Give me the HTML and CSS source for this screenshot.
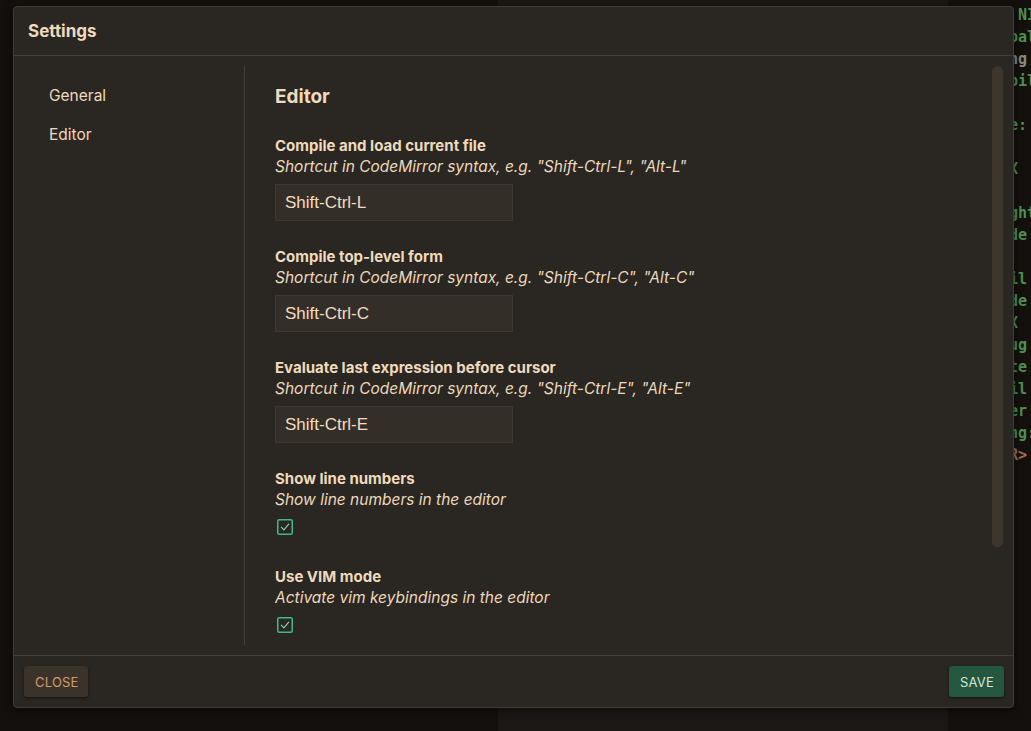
FILE: index.html
```html
<!DOCTYPE html>
<html>
<head>
<meta charset="utf-8">
<link rel="stylesheet" href="styles.css">
</head>
<body>
<div class="backdrop">
  <div class="bg-left"></div>
  <div class="bg-mid"></div>
  <div class="bg-right">
<pre class="code"><span class="g">" NIL</span>
<span class="g">epal</span>
<span class="m">ing </span>
<span class="g">opil</span>

<span class="g">le:</span>

<span class="g"> X </span>

<span class="g">ight</span>
<span class="g">nde</span>

<span class="g">pil</span>
<span class="g">nde</span>
<span class="g"> X </span>
<span class="g">aug</span>
<span class="g">ate </span>
<span class="g">pil</span>
<span class="g">ter</span>
<span class="g">ing:</span>
<span class="o">ER&gt;</span></pre>
  </div>
</div>

<div class="modal">
  <div class="modal-header">Settings</div>
  <div class="modal-body">
    <nav class="sidebar">
      <div class="nav-item">General</div>
      <div class="nav-item">Editor</div>
    </nav>
    <div class="content">
      <h2 class="section-title">Editor</h2>

      <div class="field">
        <div class="label">Compile and load current file</div>
        <div class="desc">Shortcut in CodeMirror syntax, e.g. "Shift-Ctrl-L", "Alt-L"</div>
        <div class="input">Shift-Ctrl-L</div>
      </div>

      <div class="field">
        <div class="label">Compile top-level form</div>
        <div class="desc">Shortcut in CodeMirror syntax, e.g. "Shift-Ctrl-C", "Alt-C"</div>
        <div class="input">Shift-Ctrl-C</div>
      </div>

      <div class="field">
        <div class="label">Evaluate last expression before cursor</div>
        <div class="desc">Shortcut in CodeMirror syntax, e.g. "Shift-Ctrl-E", "Alt-E"</div>
        <div class="input">Shift-Ctrl-E</div>
      </div>

      <div class="field check-field">
        <div class="label">Show line numbers</div>
        <div class="desc">Show line numbers in the editor</div>
        <div class="checkbox">
          <svg width="16" height="16" viewBox="0 0 16 16"><rect x="0.75" y="0.75" width="14.5" height="14.5" rx="1.5" fill="none" stroke="#3fb88a" stroke-width="1.5"/><path d="M4.3 8.2 L6.9 10.8 L11.7 5.2" fill="none" stroke="#8fd6b4" stroke-width="1.1" stroke-linecap="round" stroke-linejoin="round"/></svg>
        </div>
      </div>

      <div class="field check-field">
        <div class="label">Use VIM mode</div>
        <div class="desc">Activate vim keybindings in the editor</div>
        <div class="checkbox">
          <svg width="16" height="16" viewBox="0 0 16 16"><rect x="0.75" y="0.75" width="14.5" height="14.5" rx="1.5" fill="none" stroke="#3fb88a" stroke-width="1.5"/><path d="M4.3 8.2 L6.9 10.8 L11.7 5.2" fill="none" stroke="#8fd6b4" stroke-width="1.1" stroke-linecap="round" stroke-linejoin="round"/></svg>
        </div>
      </div>
    </div>
    <div class="scroll-track"><div class="scroll-thumb"></div></div>
  </div>
  <div class="modal-footer">
    <button class="btn btn-close">CLOSE</button>
    <button class="btn btn-save">SAVE</button>
  </div>
</div>
</body>
</html>
```

FILE: styles.css
```css
html, body {
  margin: 0;
  padding: 0;
  width: 1031px;
  height: 731px;
  overflow: hidden;
  background: #13100d;
  font-family: Inter, "Noto Sans", sans-serif;
}

.backdrop {
  display: flex;
  width: 1031px;
  height: 731px;
}
.bg-left { width: 498px; background: #13100d; }
.bg-mid { width: 450px; background: #1a1714; }
.bg-right { flex: 1; background: #13100d; overflow: hidden; }

.code {
  margin: 4px 0 0 52px;
  font-family: "DejaVu Sans Mono", monospace;
  font-size: 15px;
  font-weight: 600;
  line-height: 22px;
  color: #4f8f52;
  white-space: pre;
}
.code .m { color: #8a8a80; }
.code .o { color: #a26f4a; }

.modal {
  position: absolute;
  left: 13px;
  top: 6px;
  width: 999px;
  height: 700px;
  background: #2a2622;
  border: 1px solid #433c34;
  border-radius: 4px;
  box-shadow: 0 2px 8px rgba(0,0,0,0.5);
  display: flex;
  flex-direction: column;
  color: #efdabd;
}

.modal-header {
  height: 48px;
  flex: none;
  display: flex;
  align-items: center;
  padding-left: 14px;
  font-size: 17px;
  font-weight: 700;
  border-bottom: 1px solid #463e35;
}

.modal-body {
  flex: 1;
  display: flex;
  padding: 10px 0;
  min-height: 0;
}

.sidebar {
  width: 230px;
  flex: none;
  border-right: 1px solid #463e35;
  padding-top: 18px;
}
.nav-item {
  padding-left: 35px;
  font-size: 15.5px;
  line-height: 24px;
  height: 39px;
  color: #efdabd;
}

.content {
  flex: 1;
  overflow: hidden;
  padding: 19px 0 0 30px;
}

.section-title {
  margin: 0 0 26px;
  font-size: 19px;
  line-height: 24px;
  font-weight: 700;
}

.field { margin-bottom: 25px; }
.label {
  font-size: 15px;
  font-weight: 700;
  line-height: 21px;
}
.desc {
  font-size: 15.5px;
  font-style: italic;
  line-height: 21px;
  color: #ecd8bc;
}
.input {
  margin-top: 7px;
  width: 227px;
  height: 35px;
  padding-left: 9px;
  background: #342e28;
  border: 1px solid #3f3730;
  display: flex;
  align-items: center;
  font-family: "Liberation Sans", Arial, sans-serif;
  font-size: 17px;
  color: #f2dcc1;
}

.check-field { margin-bottom: 31px; }
.checkbox {
  margin-top: 9px;
  margin-left: 2px;
  width: 16px;
  height: 16px;
}
.checkbox svg { display: block; }

.scroll-track {
  width: 11px;
  flex: none;
  margin-right: 10px;
}
.scroll-thumb {
  height: 481px;
  background: #3e362d;
  border-radius: 6px;
}

.modal-footer {
  height: 51px;
  flex: none;
  border-top: 1px solid #463e35;
  display: flex;
  align-items: center;
  justify-content: space-between;
  padding: 0 9px 0 10px;
}

.btn {
  height: 31px;
  border-radius: 3px;
  border: none;
  font-family: Inter, "Noto Sans", sans-serif;
  font-size: 13px;
  letter-spacing: 0.2px;
  padding: 0 11px;
  box-shadow: 0 1px 3px rgba(0,0,0,0.5);
}
.btn-close {
  width: 64px;
  background: #3b332b;
  color: #d49a6c;
}
.btn-save {
  width: 55px;
  background: #24573e;
  color: #d2e6d8;
}
```
